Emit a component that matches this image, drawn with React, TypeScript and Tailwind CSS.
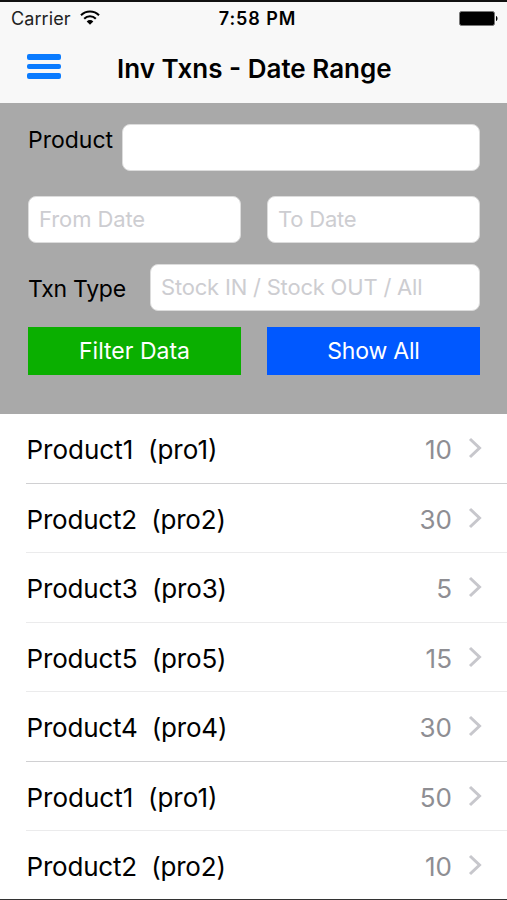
import { clsx } from 'clsx';

type Txn = {
  name: string;
  code: string;
  qty: number;
  line: string;
  tracking?: string;
};

const txns: Txn[] = [
  { name: 'Product1', code: 'pro1', qty: 10, line: 'bg-[#d0d0d2]' },
  { name: 'Product2', code: 'pro2', qty: 30, line: 'bg-[#ebebec]', tracking: 'tracking-[-0.2px]' },
  { name: 'Product3', code: 'pro3', qty: 5, line: 'bg-[#ebebec]', tracking: 'tracking-[-0.15px]' },
  { name: 'Product5', code: 'pro5', qty: 15, line: 'bg-[#ebebec]', tracking: 'tracking-[-0.15px]' },
  { name: 'Product4', code: 'pro4', qty: 30, line: 'bg-[#d0d0d2]', tracking: 'tracking-[-0.2px]' },
  { name: 'Product1', code: 'pro1', qty: 50, line: 'bg-[#ebebec]' },
  { name: 'Product2', code: 'pro2', qty: 10, line: 'bg-transparent', tracking: 'tracking-[-0.2px]' },
];

function StatusBar() {
  return (
    <div className="grid h-[32px] grid-cols-3 items-center pt-[1px] pr-[9px] pl-[11px] text-[18px] leading-none">
      <div className="flex items-center gap-[9px]">
        <span className="tracking-[0.1px] text-[#222]">Carrier</span>
        <svg className="mb-[3px]" width="20" height="15" viewBox="0 0 20 15" fill="none" stroke="#000" strokeWidth="2.1">
          <path d="M1 5.2a12.8 12.8 0 0 1 18 0" />
          <path d="M4.2 8.7a8.2 8.2 0 0 1 11.6 0" />
          <path d="M6.7 11.4a4.7 4.7 0 0 1 6.6 0L10 14.8z" fill="#000" stroke="none" />
        </svg>
      </div>
      <span className="pl-[6px] text-center font-semibold tracking-[0.9px] whitespace-nowrap">7:58 PM</span>
      <svg className="mb-[1px] justify-self-end" width="39" height="15" viewBox="0 0 39 15">
        <rect x="0.5" y="0.5" width="35" height="14" rx="2" fill="#000" stroke="#777" />
        <path d="M37 5c2 .6 2 4.400 0 5z" fill="#000" />
      </svg>
    </div>
  );
}

function NavBar() {
  return (
    <div className="flex h-[68px] items-center pl-[27px]">
      <button className="mb-[3px] flex w-[34px] flex-col gap-[4px]" aria-label="Menu">
        <span className="h-[5.500px] rounded-[2px] bg-[#0a7bff]" />
        <span className="h-[5.500px] rounded-[2px] bg-[#0a7bff]" />
        <span className="h-[5.500px] rounded-[2px] bg-[#0a7bff]" />
      </button>
      <h1 className="ml-[56px] text-[26px] font-semibold whitespace-nowrap">Inv Txns - Date Range</h1>
    </div>
  );
}

function Field({ placeholder, className }: { placeholder?: string; className?: string }) {
  return (
    <input
      type="text"
      placeholder={placeholder}
      className={clsx(
        'h-[47px] min-w-0 rounded-[8px] border border-[#dcdcdc] bg-white px-[10px] pb-[1px] text-[22px] placeholder:text-[#cdcdd1]',
        className,
      )}
    />
  );
}

function FilterPanel() {
  return (
    <section className="h-[311px] bg-[#a9a9a9] pt-[21px] pr-[27px] pl-[28px] text-[23px]">
      <div className="flex">
        <label className="w-[94px] leading-[32px]">Product</label>
        <Field className="flex-1" />
      </div>
      <div className="mt-[25px] grid grid-cols-2 gap-[26px]">
        <Field placeholder="From Date" className="tracking-[-0.1px]" />
        <Field placeholder="To Date" className="tracking-[-0.2px]" />
      </div>
      <div className="mt-[21px] flex items-center">
        <label className="w-[122px] pt-[4px] tracking-[-0.25px]">Txn Type</label>
        <Field placeholder="Stock IN / Stock OUT / All" className="flex-1 tracking-[-0.2px]" />
      </div>
      <div className="mt-[16px] grid grid-cols-2 gap-[26px] text-white">
        <button className="h-[48px] bg-[#0aaf00] pt-[1px]">Filter Data</button>
        <button className="h-[48px] bg-[#0058ff] pt-[1px] tracking-[-0.2px]">Show All</button>
      </div>
    </section>
  );
}

function TxnRow({ txn }: { txn: Txn }) {
  return (
    <li className="flex h-[69.5px] flex-col pl-[26px]">
      <div className="flex flex-1 items-center pt-[3px] pr-[25px] pl-[0.5px] text-[26px]">
        <span className={clsx('flex-1 whitespace-pre', txn.tracking)}>{`${txn.name}  (${txn.code})`}</span>
        <span className="text-[#8e8e93]">{txn.qty}</span>
        <svg className="mb-[3px] ml-[16px]" width="14" height="22" viewBox="0 0 14 22" fill="none">
          <path d="M2 2l9.500 9L2 20" stroke="#c7c7cc" strokeWidth="3" />
        </svg>
      </div>
      <div className={clsx('h-px shrink-0', txn.line)} />
    </li>
  );
}

export default function App() {
  return (
    <div className="flex h-[900px] w-[507px] flex-col overflow-hidden border-t-2 border-b border-t-[#111] border-b-[#333] bg-white font-['Inter',sans-serif] text-black">
      <header className="h-[101px] shrink-0 bg-[#f8f8f8]">
        <StatusBar />
        <NavBar />
      </header>
      <div className="shrink-0">
        <FilterPanel />
      </div>
      <ul>
        {txns.map((txn, i) => (
          <TxnRow key={i} txn={txn} />
        ))}
      </ul>
    </div>
  );
}
